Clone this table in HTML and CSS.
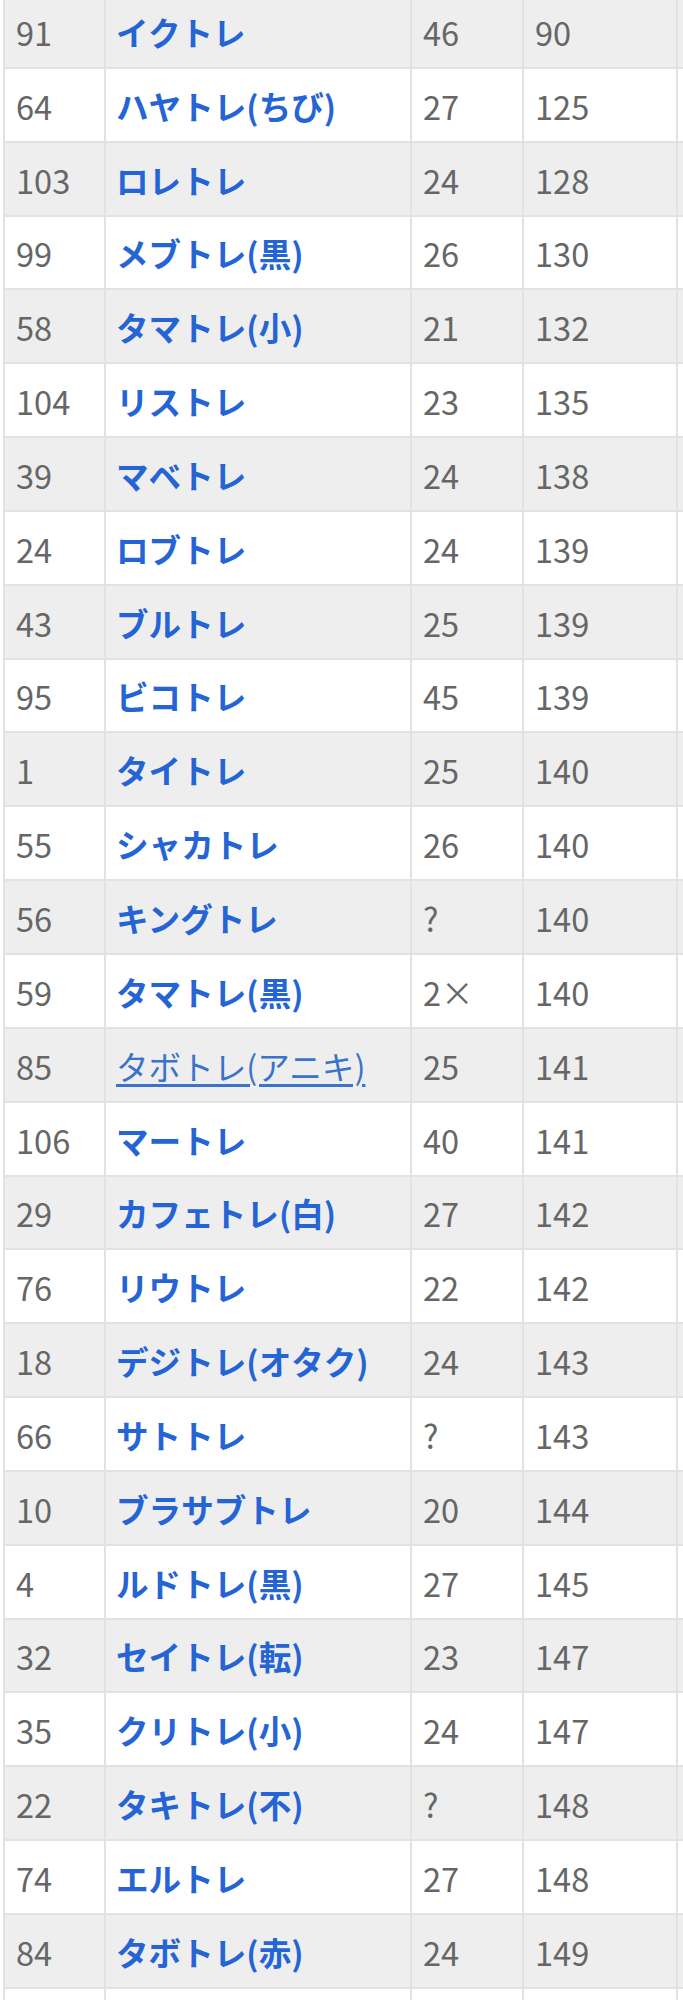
FILE: index.html
```html
<!DOCTYPE html>
<html lang="ja">
<head>
<meta charset="utf-8">
<title>トレーナー一覧</title>
<link rel="stylesheet" href="styles.css">
</head>
<body>
<div class="scroller">
<table class="list">
<colgroup>
<col class="c-no"><col class="c-name"><col class="c-a"><col class="c-b"><col class="c-x">
</colgroup>
<tbody>
<tr><td>91</td><td><a class="name" href="#">イクトレ</a></td><td>46</td><td>90</td><td></td></tr>
<tr><td>64</td><td><a class="name" href="#">ハヤトレ(ちび)</a></td><td>27</td><td>125</td><td></td></tr>
<tr><td>103</td><td><a class="name" href="#">ロレトレ</a></td><td>24</td><td>128</td><td></td></tr>
<tr><td>99</td><td><a class="name" href="#">メブトレ(黒)</a></td><td>26</td><td>130</td><td></td></tr>
<tr><td>58</td><td><a class="name" href="#">タマトレ(小)</a></td><td>21</td><td>132</td><td></td></tr>
<tr><td>104</td><td><a class="name" href="#">リストレ</a></td><td>23</td><td>135</td><td></td></tr>
<tr><td>39</td><td><a class="name" href="#">マベトレ</a></td><td>24</td><td>138</td><td></td></tr>
<tr><td>24</td><td><a class="name" href="#">ロブトレ</a></td><td>24</td><td>139</td><td></td></tr>
<tr><td>43</td><td><a class="name" href="#">ブルトレ</a></td><td>25</td><td>139</td><td></td></tr>
<tr><td>95</td><td><a class="name" href="#">ビコトレ</a></td><td>45</td><td>139</td><td></td></tr>
<tr><td>1</td><td><a class="name" href="#">タイトレ</a></td><td>25</td><td>140</td><td></td></tr>
<tr><td>55</td><td><a class="name" href="#">シャカトレ</a></td><td>26</td><td>140</td><td></td></tr>
<tr><td>56</td><td><a class="name" href="#">キングトレ</a></td><td>?</td><td>140</td><td></td></tr>
<tr><td>59</td><td><a class="name" href="#">タマトレ(黒)</a></td><td>2×</td><td>140</td><td></td></tr>
<tr><td>85</td><td><a class="name visited" href="#">タボトレ(アニキ)</a></td><td>25</td><td>141</td><td></td></tr>
<tr><td>106</td><td><a class="name" href="#">マートレ</a></td><td>40</td><td>141</td><td></td></tr>
<tr><td>29</td><td><a class="name" href="#">カフェトレ(白)</a></td><td>27</td><td>142</td><td></td></tr>
<tr><td>76</td><td><a class="name" href="#">リウトレ</a></td><td>22</td><td>142</td><td></td></tr>
<tr><td>18</td><td><a class="name" href="#">デジトレ(オタク)</a></td><td>24</td><td>143</td><td></td></tr>
<tr><td>66</td><td><a class="name" href="#">サトトレ</a></td><td>?</td><td>143</td><td></td></tr>
<tr><td>10</td><td><a class="name" href="#">ブラサブトレ</a></td><td>20</td><td>144</td><td></td></tr>
<tr><td>4</td><td><a class="name" href="#">ルドトレ(黒)</a></td><td>27</td><td>145</td><td></td></tr>
<tr><td>32</td><td><a class="name" href="#">セイトレ(転)</a></td><td>23</td><td>147</td><td></td></tr>
<tr><td>35</td><td><a class="name" href="#">クリトレ(小)</a></td><td>24</td><td>147</td><td></td></tr>
<tr><td>22</td><td><a class="name" href="#">タキトレ(不)</a></td><td>?</td><td>148</td><td></td></tr>
<tr><td>74</td><td><a class="name" href="#">エルトレ</a></td><td>27</td><td>148</td><td></td></tr>
<tr><td>84</td><td><a class="name" href="#">タボトレ(赤)</a></td><td>24</td><td>149</td><td></td></tr>
<tr><td>&nbsp;</td><td></td><td></td><td></td><td></td></tr>
</tbody>
</table>
</div>
</body>
</html>
```
FILE: styles.css
```css
html, body {
  margin: 0;
  padding: 0;
  background: #ffffff;
}

body {
  font-family: "Noto Sans CJK JP", "Noto Sans", sans-serif;
  font-size: 32.6px;
  color: #666666;
}

.scroller {
  width: 100%;
  overflow: hidden;
}

.list {
  border-collapse: collapse;
  table-layout: fixed;
  width: 824px;
  margin-top: -7px;
  margin-left: 3px;
}

.c-no { width: 101px; }
.c-name { width: 306px; }
.c-a { width: 112px; }
.c-b { width: 154px; }
.c-x { width: 151px; }

.list td {
  border: 2px solid #e2e2e2;
  height: 69.35px;
  padding: 2.5px 0 0 11px;
  vertical-align: middle;
  white-space: nowrap;
  line-height: 1;
}

.list tr:nth-child(odd) td {
  background: #eeeeee;
}

.list tr:nth-child(even) td {
  background: #ffffff;
}

.name {
  display: inline-block;
  margin-left: -1px;
  color: #2464d4;
  font-weight: 700;
  text-decoration: none;
}

.name.visited {
  color: #3a73c9;
  font-weight: 400;
  text-decoration: underline;
  text-underline-offset: 4px;
}
```
